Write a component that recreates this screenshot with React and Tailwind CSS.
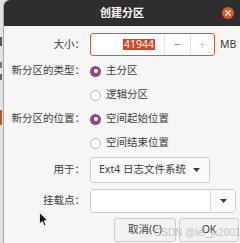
import React from 'react';

const font = { fontFamily: '"Noto Sans", "Noto Sans CJK SC", sans-serif' };

const Radio = ({ checked, label }) => (
  <div className="flex items-center gap-[5px]">
    {checked ? (
      <span className="flex h-[11px] w-[11px] items-center justify-center rounded-full bg-[#8e4a86]">
        <span className="h-[4px] w-[4px] rounded-full bg-white" />
      </span>
    ) : (
      <span className="h-[11px] w-[11px] rounded-full border border-[#b9b9b9] bg-white" />
    )}
    <span>{label}</span>
  </div>
);

const Row = ({ label, className, children }) => (
  <div className={`flex items-center ${className}`}>
    <div className="w-[81px] shrink-0 text-right">{label}</div>
    <div className="ml-[5px] flex flex-1 items-center">{children}</div>
  </div>
);

const Arrow = () => (
  <svg width="7" height="4" viewBox="0 0 7 4">
    <path d="M0 0 L7 0 L3.5 4 Z" fill="#3c3c3c" />
  </svg>
);

export default function App() {
  return (
    <div className="flex h-[243px] w-[240px] overflow-hidden bg-[#e2e2e2]" style={font}>
      {/* desktop strip left of the window */}
      <div className="relative w-[3px] shrink-0">
        <div className="absolute left-0 top-[37px] h-[9px] w-[2px] bg-[#555]" />
        <div className="absolute left-0 top-[62px] h-[6px] w-[2px] bg-[#777]" />
        <div className="absolute left-0 top-[74px] h-[6px] w-[2px] bg-[#666]" />
        <div className="absolute left-0 top-[110px] h-[15px] w-[2px] bg-[#c4531f]" />
      </div>

      <div className="relative flex flex-1 flex-col rounded-tl-[6px] border-l border-[#a9a9a9] bg-[#f6f6f6] text-[10.5px] text-[#3c3c3c]">
        {/* title bar */}
        <div className="relative flex h-[26px] items-center justify-center rounded-tl-[6px] bg-[#2e2e2e]">
          <span className="text-[11px] font-bold text-white">创建分区</span>
          <div className="absolute right-[6px] top-[7px] flex h-[12px] w-[12px] items-center justify-center rounded-full bg-[#e95420]">
            <svg width="6" height="6" viewBox="0 0 6 6">
              <path d="M0.5 0.5 L5.5 5.5 M5.5 0.5 L0.5 5.5" stroke="white" strokeWidth="1.3" />
            </svg>
          </div>
        </div>

        <div className="flex flex-col pt-[7px]">
          <Row label="大小：" className="h-[23px]">
            <div className="flex h-[23px] w-[125px] shrink-0 rounded-[3px] border border-[#e95420] bg-white">
              <div className="flex flex-1 items-center justify-end pr-[9px]">
                <span className="bg-[#d8461b] px-[1px] leading-[11px] text-white">41944</span>
              </div>
              <div className="flex w-[26px] items-center justify-center border-l border-[#e6e6e6] text-[12px] text-[#8a8a8a]">−</div>
              <div className="flex w-[24px] items-center justify-center border-l border-[#e6e6e6] text-[12px] text-[#c8c8c8]">+</div>
            </div>
            <span className="ml-[5px] whitespace-nowrap">MB</span>
          </Row>

          <Row label="新分区的类型：" className="mt-[3px] h-[24px]">
            <Radio checked label="主分区" />
          </Row>
          <Row label="" className="h-[24px]">
            <Radio label="逻辑分区" />
          </Row>
          <Row label="新分区的位置：" className="h-[24px]">
            <Radio checked label="空间起始位置" />
          </Row>
          <Row label="" className="h-[24px]">
            <Radio label="空间结束位置" />
          </Row>

          <Row label="用于：" className="mt-[2px] h-[26px]">
            <div className="flex h-[26px] w-[120px] items-center justify-between rounded-[3px] border border-[#cdcdcd] bg-[#fafafa] pl-[8px] pr-[9px]">
              <span>Ext4 日志文件系统</span>
              <Arrow />
            </div>
          </Row>

          <Row label="挂载点：" className="mt-[6px] h-[24px]">
            <div className="flex h-[24px] w-[146px] rounded-[3px] border border-[#cdcdcd] bg-white">
              <div className="flex-1" />
              <div className="flex w-[25px] items-center justify-center border-l border-[#dcdcdc] bg-[#fafafa]">
                <Arrow />
              </div>
            </div>
          </Row>

          <div className="mt-[5px] flex justify-end gap-[3px] pr-[1px]">
            <div className="flex h-[24px] w-[62px] items-center justify-center rounded-[3px] border border-[#cdcdcd] bg-[#f2f2f2]">取消(C)</div>
            <div className="flex h-[24px] w-[60px] items-center justify-center rounded-[3px] border border-[#cdcdcd] bg-[#f2f2f2]">OK</div>
          </div>
        </div>

        {/* watermark */}
        <span className="absolute left-[150px] top-[225px] whitespace-nowrap text-[10px] text-[#b4b4b4]/80" style={{ fontFamily: '"Liberation Sans", sans-serif' }}>
          CSDN @lei_jk2001
        </span>

        {/* mouse pointer */}
        <svg className="absolute left-[35px] top-[212px]" width="10" height="15" viewBox="0 0 10 15">
          <path d="M0.5 0.5 L0.5 12 L3.2 9.4 L5.2 13.8 L7 13 L5 8.7 L8.8 8.7 Z" fill="#111" stroke="#fff" strokeWidth="0.8" />
        </svg>
      </div>
    </div>
  );
}
